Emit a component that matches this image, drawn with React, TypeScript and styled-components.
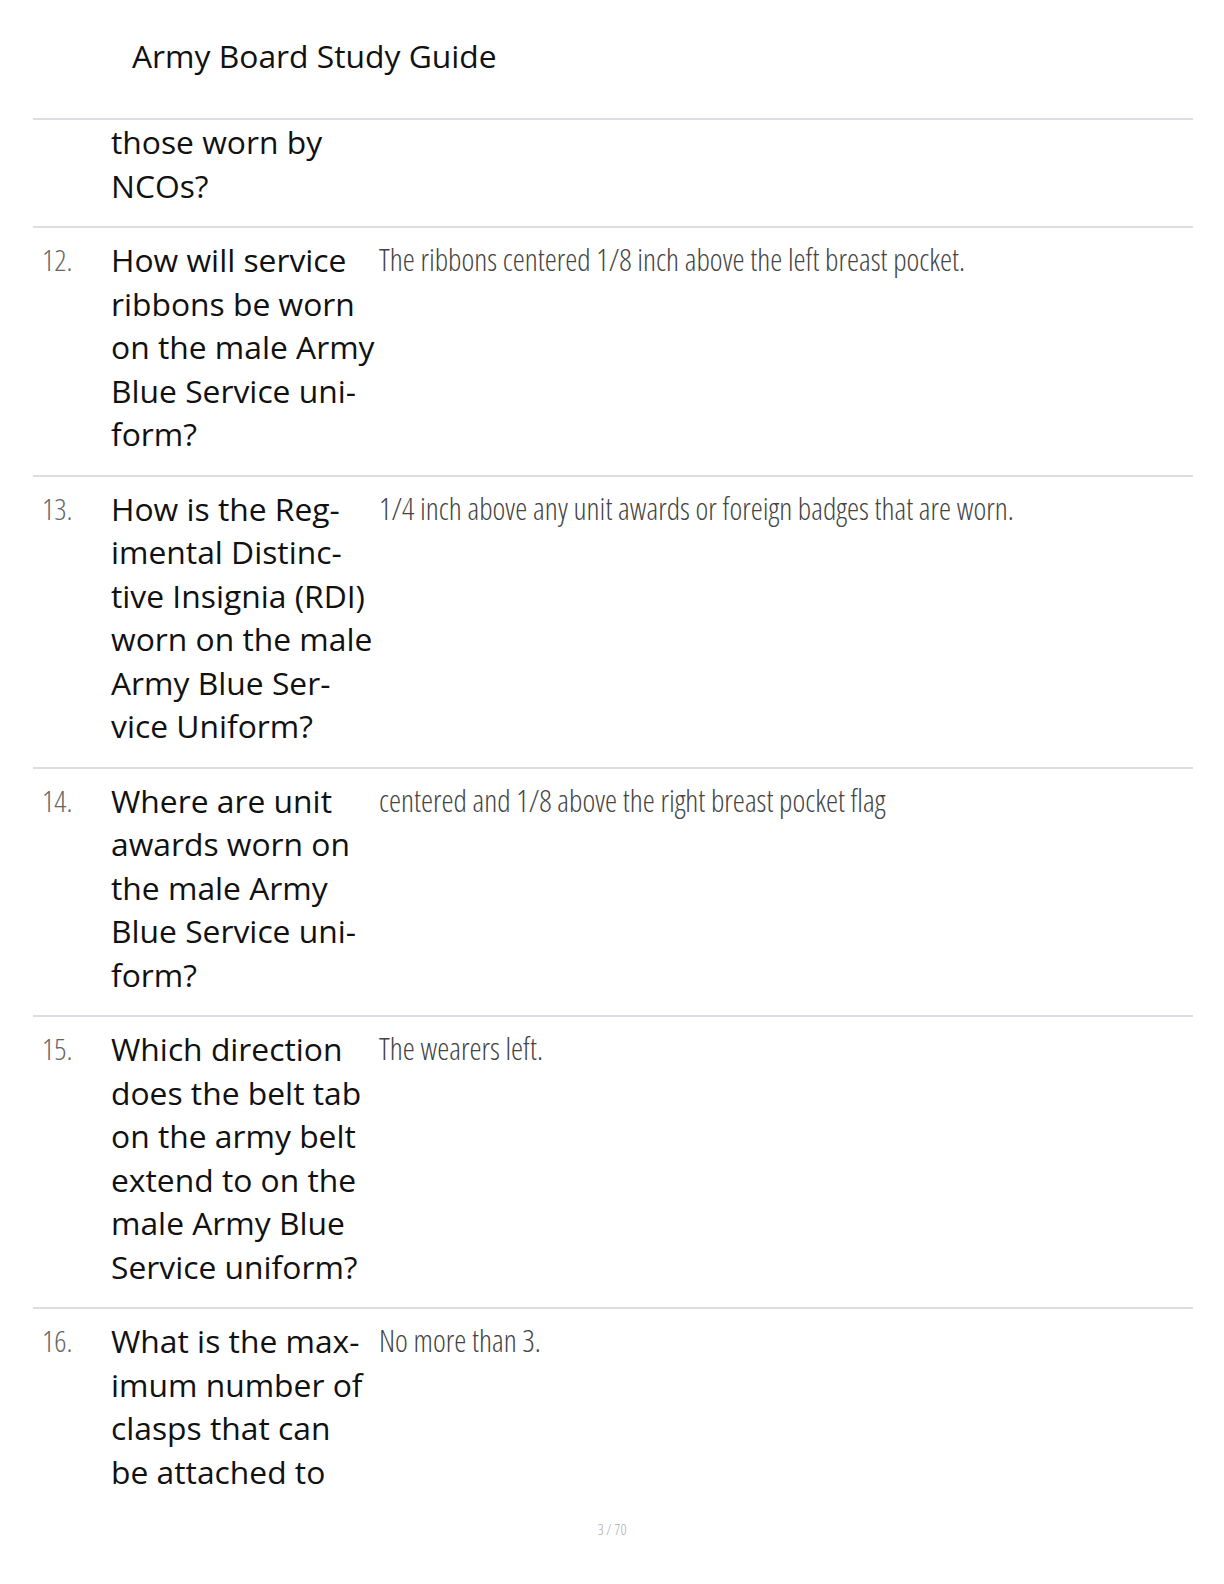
import React from "react";
import styled, { createGlobalStyle } from "styled-components";

const Global = createGlobalStyle`
  html, body { margin: 0; padding: 0; background: #ffffff; }
  body { font-family: "Open Sans", "Noto Sans", sans-serif; color: #111; }
`;

const Page = styled.div`
  width: 1224px;
  height: 1584px;
  position: relative;
  overflow: hidden;
  background: #fff;
  display: flex;
  flex-direction: column;
`;

const Header = styled.h1`
  margin: 0;
  padding: 34px 0 0 132px;
  height: 118px;
  box-sizing: border-box;
  font-family: "Open Sans", sans-serif;
  font-weight: 400;
  font-size: 31.8px;
  line-height: 44px;
  color: #111;
`;

const Table = styled.div`
  margin-left: 33px;
  width: 1160px;
  border-top: 2px solid #dcdce2;
`;

const Row = styled.div<{ $first?: boolean }>`
  display: grid;
  grid-template-columns: 69px 268px 1fr;
  padding: ${(p) => (p.$first ? "0 0 19px 9px" : "10px 0 19px 9px")};
  border-bottom: 2px solid #dcdce2;
`;

const Num = styled.div`
  font-family: "Open Sans", sans-serif;
  font-weight: 300;
  font-stretch: 75%;
  font-size: 30px;
  line-height: 43.5px;
  color: #666;
`;

const Question = styled.div`
  font-family: "Open Sans", sans-serif;
  font-weight: 400;
  font-size: 31.8px;
  line-height: 43.5px;
  color: #111;
`;

const QLine = styled.span`
  display: block;
  white-space: nowrap;
`;

const Answer = styled.div`
  font-family: "Open Sans", sans-serif;
  font-weight: 300;
  font-stretch: 75%;
  font-size: 30.5px;
  line-height: 43.5px;
  color: #444;
  white-space: nowrap;
`;

const Footer = styled.div`
  position: absolute;
  left: 0;
  right: 0;
  top: 1519px;
  text-align: center;
  font-family: "Open Sans", sans-serif;
  font-weight: 300;
  font-stretch: 75%;
  font-size: 15px;
  line-height: 20px;
  color: #aaa;
`;

type Item = { num?: string; q: string[]; a?: string; first?: boolean };

const items: Item[] = [
  { q: ["those worn by", "NCOs?"], first: true },
  {
    num: "12.",
    q: ["How will service", "ribbons be worn", "on the male Army", "Blue Service uni-", "form?"],
    a: "The ribbons centered 1/8 inch above the left breast pocket.",
  },
  {
    num: "13.",
    q: [
      "How is the Reg-",
      "imental Distinc-",
      "tive Insignia (RDI)",
      "worn on the male",
      "Army Blue Ser-",
      "vice Uniform?",
    ],
    a: "1/4 inch above any unit awards or foreign badges that are worn.",
  },
  {
    num: "14.",
    q: ["Where are unit", "awards worn on", "the male Army", "Blue Service uni-", "form?"],
    a: "centered and 1/8 above the right breast pocket flag",
  },
  {
    num: "15.",
    q: [
      "Which direction",
      "does the belt tab",
      "on the army belt",
      "extend to on the",
      "male Army Blue",
      "Service uniform?",
    ],
    a: "The wearers left.",
  },
  {
    num: "16.",
    q: ["What is the max-", "imum number of", "clasps that can", "be attached to"],
    a: "No more than 3.",
  },
];

const LastRow = styled(Row)`
  border-bottom: none;
`;

export default function App() {
  return (
    <Page>
      <Global />
      <Header>Army Board Study Guide</Header>
      <Table>
        {items.map((it, i) => {
          const R = i === items.length - 1 ? LastRow : Row;
          return (
            <R key={i} $first={it.first}>
              <Num>{it.num ?? ""}</Num>
              <Question>
                {it.q.map((l, j) => (
                  <QLine key={j}>{l}</QLine>
                ))}
              </Question>
              <Answer>{it.a ?? ""}</Answer>
            </R>
          );
        })}
      </Table>
      <Footer>3 / 70</Footer>
    </Page>
  );
}
